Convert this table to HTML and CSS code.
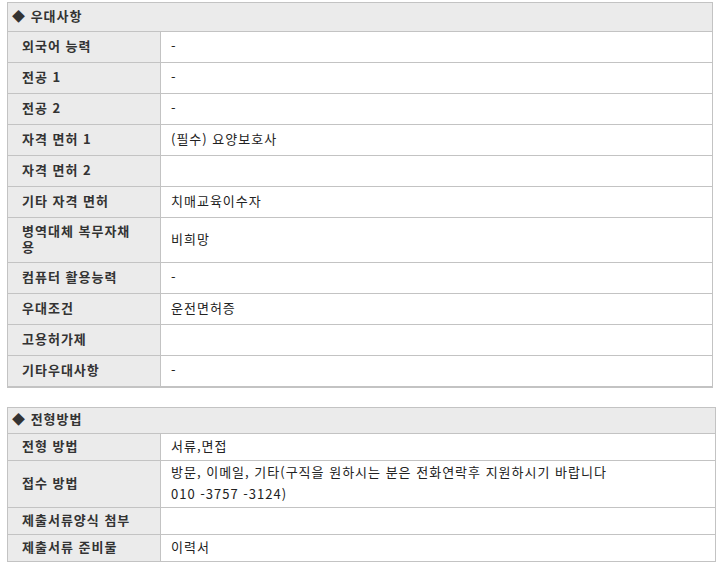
FILE: index.html
```html
<!DOCTYPE html>
<html lang="ko">
<head>
<meta charset="utf-8">
<link rel="stylesheet" href="styles.css">
</head>
<body>
<table class="tbl tbl-a">
  <colgroup><col class="c-label"><col></colgroup>
  <tr><th colspan="2" class="head">◆ 우대사항</th></tr>
  <tr><th>외국어 능력</th><td>-</td></tr>
  <tr><th>전공 1</th><td>-</td></tr>
  <tr><th>전공 2</th><td>-</td></tr>
  <tr><th>자격 면허 1</th><td>(필수) 요양보호사</td></tr>
  <tr><th>자격 면허 2</th><td></td></tr>
  <tr><th>기타 자격 면허</th><td>치매교육이수자</td></tr>
  <tr><th>병역대체 복무자채용</th><td>비희망</td></tr>
  <tr><th>컴퓨터 활용능력</th><td>-</td></tr>
  <tr><th>우대조건</th><td>운전면허증</td></tr>
  <tr><th>고용허가제</th><td></td></tr>
  <tr><th>기타우대사항</th><td>-</td></tr>
</table>

<table class="tbl tbl-b">
  <colgroup><col class="c-label"><col></colgroup>
  <tr><th colspan="2" class="head">◆ 전형방법</th></tr>
  <tr><th>전형 방법</th><td>서류,면접</td></tr>
  <tr><th>접수 방법</th><td>방문, 이메일, 기타(구직을 원하시는 분은 전화연락후 지원하시기 바랍니다<br>010 -3757 -3124)</td></tr>
  <tr><th>제출서류양식 첨부</th><td></td></tr>
  <tr><th>제출서류 준비물</th><td>이력서</td></tr>
</table>
</body>
</html>
```

FILE: styles.css
```css
html, body {
  margin: 0;
  background: #fff;
}
body {
  padding: 2px 0 0 7px;
  font-family: "Noto Sans CJK KR", "Noto Sans", sans-serif;
  font-size: 13px;
  letter-spacing: 1px;
  color: #333;
}
.tbl {
  border-collapse: collapse;
  table-layout: fixed;
  border: 1px solid #c3c3c3;
}
.tbl-a {
  width: 706px;
  border-bottom: 2px solid #c3c3c3;
}
.tbl-b {
  width: 709px;
  margin-top: 19px;
}
.c-label {
  width: 153px;
}
.tbl th, .tbl td {
  border: 1px solid #c3c3c3;
  text-align: left;
  vertical-align: middle;
}
.tbl th {
  background: #ebebeb;
  font-weight: bold;
  color: #333;
  padding: 0 20px 0 14px;
}
.tbl td {
  background: #fff;
  font-weight: normal;
  color: #222;
  padding: 0 8px 0 10px;
}
.tbl-a th, .tbl-a td {
  height: 31px;
  line-height: 16px;
  padding-top: 5px;
  padding-bottom: 7px;
  box-sizing: border-box;
}
.tbl-b th, .tbl-b td {
  height: 27px;
  line-height: 22px;
  padding-top: 0;
  padding-bottom: 2px;
  box-sizing: border-box;
}
.tbl .head {
  padding-left: 4px;
  background: #ebebeb;
}
.tbl-a .head {
  height: 29px;
}
.tbl-b .head {
  height: 26px;
}
```
